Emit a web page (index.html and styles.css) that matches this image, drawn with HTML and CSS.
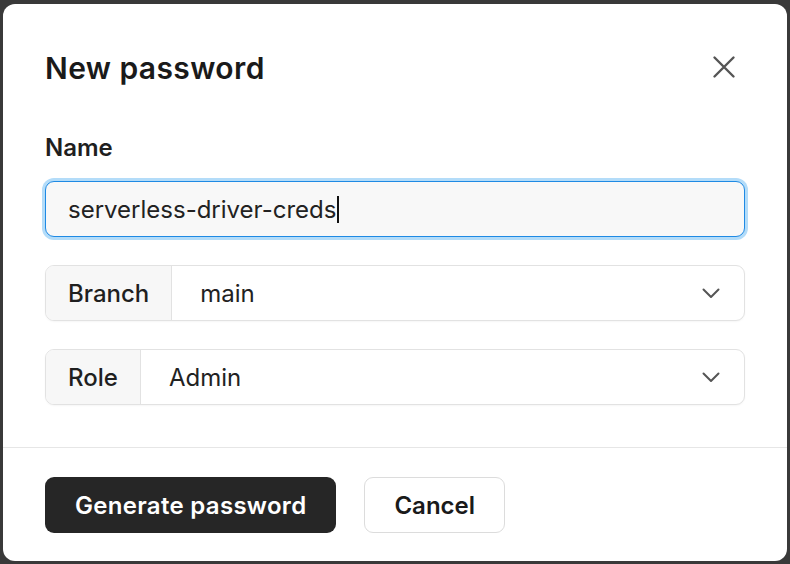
FILE: index.html
```html
<!DOCTYPE html>
<html lang="en">
<head>
<meta charset="utf-8">
<title>New password</title>
<link rel="stylesheet" href="styles.css">
</head>
<body>
<div class="modal">
  <div class="modal-body">
    <div class="header">
      <h1 class="title">New password</h1>
      <button class="close" aria-label="Close">
        <svg width="24" height="24" viewBox="0 0 24 24" fill="none" stroke="#555" stroke-width="2.4" stroke-linecap="round"><path d="M2.5 2.5L21.5 21.5M21.5 2.5L2.5 21.5"/></svg>
      </button>
    </div>
    <label class="label" for="name">Name</label>
    <div class="input focused"><span class="value">serverless-driver-creds</span><span class="caret"></span></div>
    <div class="select">
      <span class="addon">Branch</span>
      <span class="select-value">main</span>
      <svg class="chev" width="24" height="24" viewBox="0 0 24 24" fill="none" stroke="#555" stroke-width="2" stroke-linecap="round" stroke-linejoin="round"><path d="M4.5 8.5l7.5 7.5 7.5-7.5"/></svg>
    </div>
    <div class="select">
      <span class="addon">Role</span>
      <span class="select-value">Admin</span>
      <svg class="chev" width="24" height="24" viewBox="0 0 24 24" fill="none" stroke="#555" stroke-width="2" stroke-linecap="round" stroke-linejoin="round"><path d="M4.5 8.5l7.5 7.5 7.5-7.5"/></svg>
    </div>
  </div>
  <div class="footer">
    <button class="btn primary">Generate password</button>
    <button class="btn secondary">Cancel</button>
  </div>
</div>
</body>
</html>
```
FILE: styles.css
```css
html, body {
  margin: 0;
  padding: 0;
}
body {
  background: #393939;
  font-family: Inter, "Noto Sans", sans-serif;
  color: #1c1c1c;
  width: 790px;
  height: 564px;
  overflow: hidden;
}
.modal {
  margin: 4px 3px 0 3px;
  width: 784px;
  height: 557px;
  background: #fff;
  border-radius: 12px;
  box-sizing: border-box;
  display: flex;
  flex-direction: column;
}
.modal-body {
  padding: 46px 42px 42px;
  display: flex;
  flex-direction: column;
}
.header {
  display: flex;
  align-items: center;
  justify-content: space-between;
  height: 36px;
  margin-bottom: 46px;
}
.title {
  margin: 0;
  font-size: 30px;
  line-height: 36px;
  font-weight: 600;
  letter-spacing: 0.4px;
  color: #1a1a1a;
}
.close {
  border: 0;
  background: none;
  padding: 0;
  width: 24px;
  height: 24px;
  margin-right: 9px;
  margin-top: -2px;
  display: flex;
}
.label {
  font-size: 24px;
  line-height: 32px;
  font-weight: 600;
  color: #1f1f1f;
  margin-bottom: 17px;
}
.input {
  height: 56px;
  box-sizing: border-box;
  border: 1px solid #1f8ae4;
  border-radius: 9px;
  background: #f8f8f8;
  box-shadow: 0 0 0 3px #b3dcf9;
  display: flex;
  align-items: center;
  padding: 0 22px;
  font-size: 24px;
  color: #222;
  margin-bottom: 28px;
}
.caret {
  display: inline-block;
  width: 1.5px;
  height: 27px;
  background: #111;
  margin-left: 1px;
}
.select {
  height: 56px;
  box-sizing: border-box;
  border: 1px solid #e2e2e2;
  border-radius: 9px;
  background: #fff;
  display: flex;
  align-items: center;
  margin-bottom: 28px;
  box-shadow: 0 1px 2px rgba(0,0,0,0.04);
}
.select:last-child {
  margin-bottom: 0;
}
.addon {
  align-self: stretch;
  display: flex;
  align-items: center;
  padding: 0 22px;
  background: #f7f7f7;
  border-right: 1px solid #e2e2e2;
  border-radius: 8px 0 0 8px;
  font-size: 24px;
  font-weight: 500;
  color: #1f1f1f;
}
.select-value {
  flex: 1;
  padding-left: 28px;
  font-size: 24px;
  color: #222;
}
.chev {
  margin-right: 21px;
}
.footer {
  border-top: 1px solid #e6e6e6;
  padding: 29px 42px 28px;
  display: flex;
  gap: 28px;
}
.btn {
  height: 56px;
  padding: 0 30px;
  border-radius: 9px;
  font-family: Inter, "Noto Sans", sans-serif;
  font-size: 24px;
  font-weight: 600;
  box-sizing: border-box;
}
.primary {
  background: #262626;
  color: #fff;
  border: 0;
  letter-spacing: 0.3px;
}
.secondary {
  background: #fff;
  color: #1a1a1a;
  border: 1px solid #dcdcdc;
  padding: 0 29px;
}
```
